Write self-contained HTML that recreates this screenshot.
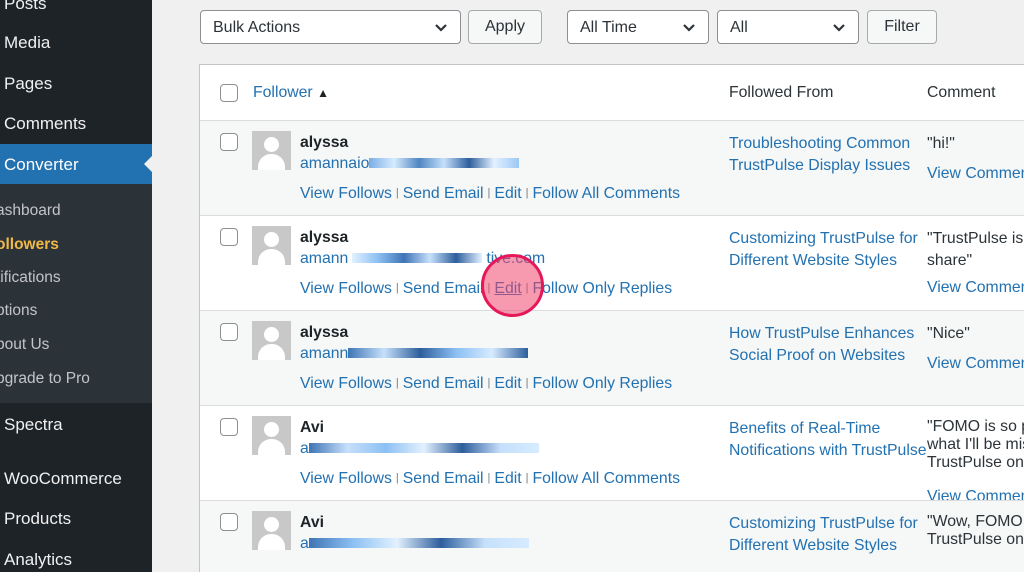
<!DOCTYPE html><html><head><style>
*{margin:0;padding:0;box-sizing:border-box}
html,body{width:1024px;height:572px;overflow:hidden}
body{background:#f0f0f1;font-family:"Liberation Sans",Arial,sans-serif;position:relative;font-size:15.8px}
.a{position:absolute;white-space:nowrap}
#sb{position:absolute;left:0;top:0;width:152px;height:572px;background:#1d2327}
.m{position:absolute;left:4px;color:#f0f0f1;font-size:17px;white-space:nowrap}
.s{position:absolute;left:-4px;color:#c3c4c7;font-size:15.5px;white-space:nowrap}
.sel{position:absolute;top:10px;height:34px;border:1px solid #8c8f94;border-radius:4px;background:#fff;color:#2c3338;padding:8px 12px;font-size:16px}
.sel svg{position:absolute;right:12px;top:12px}
.btn{position:absolute;top:10px;height:34px;border:1px solid #a7aaad;border-radius:4px;background:#f6f7f7;color:#2c3338;font-size:16px;text-align:center;padding-top:7px}
.row{position:absolute;left:200px;width:824px;height:95px;border-top:1px solid #dcdcde;overflow:hidden;white-space:nowrap}
.cb{position:absolute;left:20px;width:18px;height:18px;border:1px solid #8c8f94;border-radius:4px;background:#fff}
.av{position:absolute;left:52px;top:10px;width:39px;height:39px;background:#c8c8c8;overflow:hidden}
.av:before{content:"";position:absolute;left:12px;top:6px;width:15px;height:15px;border-radius:50%;background:#fff}
.av:after{content:"";position:absolute;left:6px;top:23px;width:27px;height:22px;border-radius:13px 13px 0 0;background:#fff}
.nm{position:absolute;left:100px;top:13px;font-weight:bold;color:#1d2327}
.em{position:absolute;left:100px;top:34px;color:#2271b1}
.ac{position:absolute;left:100px;top:64px;color:#2271b1}
.ac i{font-style:normal;color:#777;font-size:11px;margin:0 4px;position:relative;top:-2px}
.ff{position:absolute;left:529px;top:12px;color:#2271b1;line-height:22px}
.cm{position:absolute;left:727px;top:12px;color:#2c3338;line-height:22px}
.vc{position:absolute;left:727px;color:#2271b1}
</style></head><body>
<div id="sb">
<div class="m" style="top:-6px">Posts</div>
<div class="m" style="top:33px">Media</div>
<div class="m" style="top:74px">Pages</div>
<div class="m" style="top:114px">Comments</div>
<div style="position:absolute;left:0;top:144px;width:152px;height:40px;background:#2271b1"></div>
<div class="m" style="top:155px;color:#fff">Converter</div>
<div style="position:absolute;right:0;top:156px;width:0;height:0;border:8px solid transparent;border-right-color:#f0f0f1"></div>
<div style="position:absolute;left:0;top:184px;width:152px;height:219px;background:#2c3338"></div>
<div class="s" style="top:202px">ashboard</div>
<div class="s" style="top:236px;color:#f0b849;font-weight:bold">ollowers</div>
<div class="s" style="top:269px">tifications</div>
<div class="s" style="top:302px">ptions</div>
<div class="s" style="top:336px">bout Us</div>
<div class="s" style="top:370px">pgrade to Pro</div>
<div class="m" style="top:415px">Spectra</div>
<div class="m" style="top:469px">WooCommerce</div>
<div class="m" style="top:509px">Products</div>
<div class="m" style="top:550px">Analytics</div>
</div>
<div class="sel" style="left:200px;width:261px">Bulk Actions<svg width="14" height="10"><path d="M2 2l5 5 5-5" stroke="#2c3338" stroke-width="2.2" fill="none"/></svg></div>
<div class="btn" style="left:468px;width:74px">Apply</div>
<div class="sel" style="left:567px;width:142px">All Time<svg width="14" height="10"><path d="M2 2l5 5 5-5" stroke="#2c3338" stroke-width="2.2" fill="none"/></svg></div>
<div class="sel" style="left:717px;width:142px">All<svg width="14" height="10"><path d="M2 2l5 5 5-5" stroke="#2c3338" stroke-width="2.2" fill="none"/></svg></div>
<div class="btn" style="left:867px;width:70px">Filter</div>
<div style="position:absolute;left:199px;top:64px;width:830px;height:520px;border:1px solid #c3c4c7;background:#fff"></div>
<div class="cb" style="left:220px;top:84px"></div>
<div class="a" style="left:253px;top:84px;color:#2271b1">Follower <span style="color:#1d2327;font-size:12px">▲</span></div>
<div class="a" style="left:729px;top:84px;color:#2c3338">Followed From</div>
<div class="a" style="left:927px;top:84px;color:#2c3338">Comment</div>

<div class="row" style="top:120px;background:#f6f7f7"><div class="cb" style="top:12px"></div><div class="av"></div><div class="nm">alyssa</div><div class="em">amannaio<span style="display:inline-block;width:150px;height:10px;background:linear-gradient(90deg,#7aaee6,#d6ebff,#4f86c1,#c6e0fb,#2d5e9c,#e3f1ff,#9cc8f5)"></span></div><div class="ac">View Follows<i>|</i>Send Email<i>|</i>Edit<i>|</i>Follow All Comments</div><div class="ff">Troubleshooting Common<br>TrustPulse Display Issues</div><div class="cm">"hi!"</div><div class="vc" style="top:44px">View Comment</div></div>

<div class="row" style="top:215px;background:#fff"><div class="cb" style="top:12px"></div><div class="av"></div><div class="nm">alyssa</div><div class="em">amann<span style="display:inline-block;width:130px;height:10px;margin:0 4px;background:linear-gradient(90deg,#e3f1ff,#8cc0f3,#3f74b5,#c6e0fb,#2d5e9c,#e3f1ff)"></span>tive.com</div><div class="ac">View Follows<i>|</i>Send Email<i>|</i><u>Edit</u><i>|</i>Follow Only Replies</div><div class="ff">Customizing TrustPulse for<br>Different Website Styles</div><div class="cm">"TrustPulse is<br>share"</div><div class="vc" style="top:63px">View Comment</div></div>

<div class="row" style="top:310px;background:#f6f7f7"><div class="cb" style="top:12px"></div><div class="av"></div><div class="nm">alyssa</div><div class="em">amann<span style="display:inline-block;width:180px;height:10px;background:linear-gradient(90deg,#3f74b5,#c6e0fb,#2d5e9c,#8cc0f3,#d6ebff,#2d5e9c)"></span></div><div class="ac">View Follows<i>|</i>Send Email<i>|</i>Edit<i>|</i>Follow Only Replies</div><div class="ff">How TrustPulse Enhances<br>Social Proof on Websites</div><div class="cm">"Nice"</div><div class="vc" style="top:44px">View Comment</div></div>

<div class="row" style="top:405px;background:#fff"><div class="cb" style="top:12px"></div><div class="av"></div><div class="nm">Avi</div><div class="em">a<span style="display:inline-block;width:230px;height:10px;background:linear-gradient(90deg,#3f74b5,#c6e0fb,#8cc0f3,#e3f1ff,#2d5e9c,#c6e0fb,#d6ebff)"></span></div><div class="ac">View Follows<i>|</i>Send Email<i>|</i>Edit<i>|</i>Follow All Comments</div><div class="ff">Benefits of Real-Time<br>Notifications with TrustPulse</div><div class="cm" style="line-height:18px;top:12px">"FOMO is so p<br>what I'll be mis<br>TrustPulse on</div><div class="vc" style="top:82px">View Comment</div></div>

<div class="row" style="top:500px;background:#f6f7f7;height:72px"><div class="cb" style="top:12px"></div><div class="av"></div><div class="nm">Avi</div><div class="em">a<span style="display:inline-block;width:220px;height:10px;background:linear-gradient(90deg,#3f74b5,#8cc0f3,#e3f1ff,#2d5e9c,#c6e0fb,#d6ebff)"></span></div><div class="ff">Customizing TrustPulse for<br>Different Website Styles</div><div class="cm" style="line-height:18px">"Wow, FOMO<br>TrustPulse on</div></div>

<div style="position:absolute;left:481px;top:254px;width:63px;height:63px;border-radius:50%;background:rgba(240,70,110,.55);border:3px solid #e5195a"></div>
</body></html>
